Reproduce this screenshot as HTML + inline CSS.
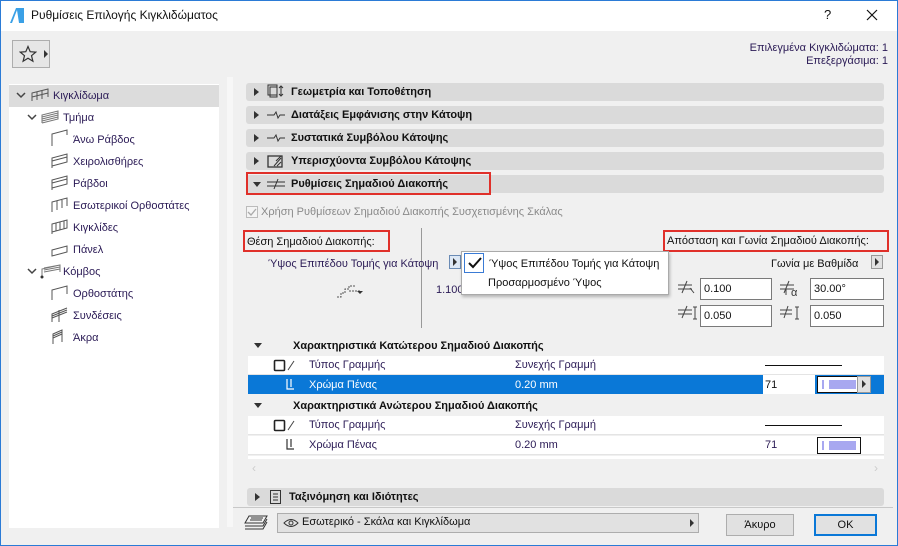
<!DOCTYPE html>
<html><head><meta charset="utf-8"><style>
*{box-sizing:border-box;margin:0;padding:0}
body{width:898px;height:546px;overflow:hidden;background:#f0f0f0;font-family:"Liberation Sans","DejaVu Sans",sans-serif;font-size:11px;color:#1e1040;position:relative}
.a{position:absolute;white-space:nowrap}
.win{position:absolute;left:0;top:0;width:898px;height:546px;border:1px solid #2b7bd6}
.hdr{position:absolute;left:246px;width:638px;height:18px;background:#dadada;border-radius:3px;font-weight:bold;font-size:11px;color:#111}
.hdr .t{position:absolute;left:45px;top:3px}
.tri{position:absolute;left:8px;top:5px;width:0;height:0;border-top:4px solid transparent;border-bottom:4px solid transparent;border-left:5px solid #333}
.trd{position:absolute;width:0;height:0;border-left:4px solid transparent;border-right:4px solid transparent;border-top:5px solid #333}
.red{position:absolute;border:2px solid #e0302a}
.inp{position:absolute;width:72px;height:22px;background:#fff;border:1px solid #7a7a7a;padding:4px 3px;font-size:11px;color:#111}
.tree .a{font-size:11px;color:#2a1a55}
.row{position:absolute;left:248px;width:636px;height:19px;background:#fff;border-bottom:1px solid #e4e4e4}
.btn{position:absolute;height:22px;background:#e1e1e1;border:1px solid #adadad;text-align:center;padding-top:4px;color:#111}
</style></head><body>
<div class="win"></div>
<div class="a" style="left:1px;top:1px;width:896px;height:30px;background:#fff"></div>
<svg class="a" style="left:9px;top:7px" width="16" height="17"><path d="M1 16 L7 1 L15 1 L15 16 Z" fill="#3aa0e6"/><path d="M3 16 L8 3 L10 16Z" fill="#fff"/></svg>
<div class="a" style="left:31px;top:8px;font-size:12px;color:#111">Ρυθμίσεις Επιλογής Κιγκλιδώματος</div>
<div class="a" style="left:824px;top:7px;font-size:13px;color:#111">?</div>
<svg class="a" style="left:866px;top:9px" width="12" height="12"><path d="M1 1L11 11M11 1L1 11" stroke="#111" stroke-width="1.2"/></svg>
<div class="a" style="left:12px;top:40px;width:38px;height:28px;border:1px solid #adadad;background:#e6e6e6"></div>
<svg class="a" style="left:19px;top:45px" width="18" height="18"><path d="M9 1.5 L11.2 6.7 L16.8 7.1 L12.5 10.7 L13.9 16.2 L9 13.2 L4.1 16.2 L5.5 10.7 L1.2 7.1 L6.8 6.7Z" fill="none" stroke="#333" stroke-width="1.2"/></svg>
<div class="a" style="left:44px;top:50px;border-top:4px solid transparent;border-bottom:4px solid transparent;border-left:4px solid #333"></div>
<div class="a" style="right:10px;top:42px;text-align:right;font-size:11px;color:#2a1a55;line-height:13px">Επιλεγμένα Κιγκλιδώματα: 1<br>Επεξεργάσιμα: 1</div>
<div class="a" style="left:9px;top:84px;width:210px;height:444px;background:#fff"></div>
<div class="a" style="left:9px;top:85px;width:210px;height:22px;background:#dcdcdc"></div>
<div class="a" style="left:227px;top:77px;width:6px;height:450px;background:#f7f7f7"></div>
<div class="tree">
<svg class="a" style="left:16px;top:92px" width="10" height="8"><path d="M1 1L5 5L9 1" stroke="#444" fill="none" stroke-width="1.5"/></svg>
<svg class="a" style="left:31px;top:88px" width="18" height="14"><path d="M1 13V5L17 1V9M1 5L17 1M6 4V12M11 3V11M1 9L17 5" stroke="#555" fill="none"/></svg>
<div class="a" style="left:53px;top:90px">Κιγκλίδωμα</div>
<svg class="a" style="left:27px;top:114px" width="10" height="8"><path d="M1 1L5 5L9 1" stroke="#444" fill="none" stroke-width="1.5"/></svg>
<svg class="a" style="left:41px;top:110px" width="18" height="14"><path d="M1 13V5L17 1V9L1 13M1 7L17 3M1 9L17 5M1 11L17 7" stroke="#777" fill="none"/></svg>
<div class="a" style="left:63px;top:112px">Τμήμα</div>
<div class="a" style="left:73px;top:134px">Άνω Ράβδος</div>
<div class="a" style="left:73px;top:156px">Χειρολισθήρες</div>
<div class="a" style="left:73px;top:178px">Ράβδοι</div>
<div class="a" style="left:73px;top:200px">Εσωτερικοί Ορθοστάτες</div>
<div class="a" style="left:73px;top:222px">Κιγκλίδες</div>
<div class="a" style="left:73px;top:244px">Πάνελ</div>
<svg class="a" style="left:27px;top:268px" width="10" height="8"><path d="M1 1L5 5L9 1" stroke="#444" fill="none" stroke-width="1.5"/></svg>
<svg class="a" style="left:40px;top:263px" width="22" height="16"><path d="M2 14V6L20 2V9M4 5L20 2M4 7L20 4M4 9L20 6" stroke="#777" fill="none"/><circle cx="2" cy="14" r="1.5" fill="#333"/></svg>
<div class="a" style="left:63px;top:266px">Κόμβος</div>
<div class="a" style="left:73px;top:288px">Ορθοστάτης</div>
<div class="a" style="left:73px;top:310px">Συνδέσεις</div>
<div class="a" style="left:73px;top:332px">Άκρα</div>
<svg class="a" style="left:50px;top:128px" width="20" height="225" stroke="#555" fill="none">
<path d="M2 18V6L17 2V7"/>
<path d="M2 40V30L17 26V34L2 38M2 33L17 29"/>
<path d="M2 62V52L17 48V56L2 60M2 55L17 51"/>
<path d="M2 84V74L17 70V78M7 73V82M12 72V80"/>
<path d="M2 106V96L17 92V100L2 104M6 95V103M10 94V102M14 93V101"/>
<path d="M2 122L17 118V124L2 128Z"/>
<path d="M2 172V162L17 158V166"/>
<path d="M2 194V186L17 180M2 188L17 182M2 190L17 184M9 182V194"/>
<path d="M3 216V206L12 202V214M3 208L12 204M3 210L12 206"/>
</svg>
</div>
<div class="hdr" style="top:83px"><div class="tri"></div><svg class="a" style="left:20px;top:1px" width="20" height="16"><rect x="2" y="1" width="9" height="10" fill="none" stroke="#333"/><rect x="4" y="3" width="7" height="10" fill="none" stroke="#333"/><path d="M15 2V12M13 4L15 2L17 4M13 10L15 12L17 10" stroke="#333" fill="none"/></svg><div class="t">Γεωμετρία και Τοποθέτηση</div></div>
<div class="hdr" style="top:106px"><div class="tri"></div><svg class="a" style="left:20px;top:4px" width="20" height="10"><path d="M1 5H8L10 2L12 8L14 5H19" stroke="#333" fill="none"/></svg><div class="t">Διατάξεις Εμφάνισης στην Κάτοψη</div></div>
<div class="hdr" style="top:129px"><div class="tri"></div><svg class="a" style="left:20px;top:4px" width="20" height="10"><path d="M1 5H8L10 2L12 8L14 5H19" stroke="#333" fill="none"/></svg><div class="t">Συστατικά Συμβόλου Κάτοψης</div></div>
<div class="hdr" style="top:152px"><div class="tri"></div><svg class="a" style="left:20px;top:1px" width="20" height="16"><rect x="2" y="3" width="14" height="11" fill="none" stroke="#333" stroke-width="1.3"/><path d="M8 13L15 5M11 13L15 9M10 8L15 3" stroke="#333"/></svg><div class="t">Υπερισχύοντα Συμβόλου Κάτοψης</div></div>
<div class="hdr" style="top:175px"><div class="trd" style="left:7px;top:7px"></div><svg class="a" style="left:20px;top:3px" width="20" height="12"><path d="M1 4H19M1 8H19M12 1L8 11" stroke="#333" fill="none"/></svg><div class="t">Ρυθμίσεις Σημαδιού Διακοπής</div></div>
<div class="red" style="left:246px;top:172px;width:245px;height:23px"></div>
<svg class="a" style="left:246px;top:206px" width="12" height="12"><rect x="0.5" y="0.5" width="11" height="11" fill="#f4f4f4" stroke="#bbb"/><path d="M2 6L5 9L10 3" stroke="#aaa" fill="none" stroke-width="1.3"/></svg>
<div class="a" style="left:261px;top:206px;color:#8a8a8a">Χρήση Ρυθμίσεων Σημαδιού Διακοπής Συσχετισμένης Σκάλας</div>
<div class="a" style="left:247px;top:236px;color:#111">Θέση Σημαδιού Διακοπής:</div>
<div class="red" style="left:243px;top:230px;width:147px;height:22px"></div>
<div class="a" style="left:667px;top:235px;color:#111">Απόσταση και Γωνία Σημαδιού Διακοπής:</div>
<div class="red" style="left:663px;top:230px;width:226px;height:22px"></div>
<div class="a" style="left:421px;top:228px;width:1px;height:100px;background:#999"></div>
<div class="a" style="left:268px;top:258px;color:#2a1a55">Ύψος Επιπέδου Τομής για Κάτοψη</div>
<div class="a" style="left:449px;top:255px;width:12px;height:14px;background:#dde8f5;border:1px solid #6a8bb5"></div>
<div class="a" style="left:453px;top:258px;border-top:4px solid transparent;border-bottom:4px solid transparent;border-left:4px solid #333"></div>
<svg class="a" style="left:335px;top:283px" width="30" height="16"><path d="M2 14H6V10H10V6H14V3H20M14 8H26" stroke="#555" fill="none" stroke-dasharray="2 1"/><path d="M22 8L25 11L28 8Z" fill="#333"/></svg>
<div class="a" style="left:436px;top:284px;color:#2a1a55">1.100</div>
<div class="a" style="left:461px;top:251px;width:208px;height:44px;background:#fff;border:1px solid #aaa;box-shadow:1px 2px 3px rgba(0,0,0,.25)"></div>
<div class="a" style="left:464px;top:253px;width:20px;height:20px;border:1px solid #3a7bd5"></div>
<svg class="a" style="left:467px;top:256px" width="16" height="14"><path d="M2 7L6 11L14 2" stroke="#111" fill="none" stroke-width="2"/></svg>
<div class="a" style="left:489px;top:258px;color:#111">Ύψος Επιπέδου Τομής για Κάτοψη</div>
<div class="a" style="left:488px;top:277px;color:#111">Προσαρμοσμένο Ύψος</div>
<div class="a" style="left:771px;top:258px;color:#111">Γωνία με Βαθμίδα</div>
<div class="a" style="left:871px;top:255px;width:12px;height:14px;background:#e1e1e1;border:1px solid #999"></div>
<div class="a" style="left:875px;top:258px;border-top:4px solid transparent;border-bottom:4px solid transparent;border-left:4px solid #333"></div>
<svg class="a" style="left:676px;top:279px" width="24" height="50" stroke="#444" fill="none"><path d="M2 6H16M2 10H16M11 2L6 14M14 9L18 14"/><path d="M2 31H16M2 35H16M11 27L6 39M19 28V40M17 28H21M17 40H21"/></svg>
<div class="inp" style="left:700px;top:278px">0.100</div>
<div class="inp" style="left:700px;top:305px">0.050</div>
<svg class="a" style="left:778px;top:279px" width="26" height="50" stroke="#444" fill="none"><path d="M2 6H16M2 10H16M11 2L6 14M8 10V16" /><text x="13" y="17" font-size="11" fill="#333" stroke="none" font-family="Liberation Sans">α</text><path d="M2 31H14M2 35H14M10 27L6 39M19 28V40M17 28H21M17 40H21"/></svg>
<div class="inp" style="left:810px;top:278px;width:74px">30.00°</div>
<div class="inp" style="left:810px;top:305px;width:74px">0.050</div>
<div class="trd" style="left:254px;top:343px"></div>
<div class="a" style="left:293px;top:340px;font-weight:bold;color:#111">Χαρακτηριστικά Κατώτερου Σημαδιού Διακοπής</div>
<div class="row" style="top:356px"></div>
<div class="a" style="left:248px;top:375px;width:636px;height:19px;background:#0a78d7"></div>
<div class="a" style="left:763px;top:375px;width:52px;height:19px;background:#fff"></div>
<div class="trd" style="left:254px;top:403px"></div>
<div class="a" style="left:293px;top:400px;font-weight:bold;color:#111">Χαρακτηριστικά Ανώτερου Σημαδιού Διακοπής</div>
<div class="row" style="top:416px"></div>
<div class="row" style="top:436px"></div>
<div class="a" style="left:248px;top:456px;width:636px;height:3px;background:#fff"></div>
<svg class="a" style="left:272px;top:357px" width="30" height="100" fill="none"><rect x="2.5" y="3.5" width="10" height="10" rx="1" stroke="#222" stroke-width="1.6"/><path d="M16 13L22 4" stroke="#444"/><path d="M15 22V32H22M19 22V30" stroke="#fff" stroke-width="1.2"/><rect x="2.5" y="63.5" width="10" height="10" rx="1" stroke="#222" stroke-width="1.6"/><path d="M16 73L22 64" stroke="#444"/><path d="M15 82V92H22M19 82V90" stroke="#333" stroke-width="1.2"/></svg>
<div class="a" style="left:309px;top:359px;color:#2a1a55">Τύπος Γραμμής</div>
<div class="a" style="left:515px;top:359px;color:#2a1a55">Συνεχής Γραμμή</div>
<div class="a" style="left:765px;top:365px;width:77px;height:1px;background:#111"></div>
<div class="a" style="left:309px;top:379px;color:#fff">Χρώμα Πένας</div>
<div class="a" style="left:515px;top:379px;color:#fff">0.20 mm</div>
<div class="a" style="left:765px;top:379px;color:#111">71</div>
<div class="a" style="left:817px;top:376px;width:54px;height:17px;background:#fff;border:1px solid #111"></div>
<div class="a" style="left:822px;top:380px;width:2px;height:9px;background:#a8a8f0"></div>
<div class="a" style="left:829px;top:380px;width:27px;height:9px;background:#a8a8f0"></div>
<div class="a" style="left:857px;top:376px;width:14px;height:17px;background:#e1e1e1;border:1px solid #999"></div>
<div class="a" style="left:862px;top:380px;border-top:4px solid transparent;border-bottom:4px solid transparent;border-left:4px solid #333"></div>
<div class="a" style="left:309px;top:419px;color:#2a1a55">Τύπος Γραμμής</div>
<div class="a" style="left:515px;top:419px;color:#2a1a55">Συνεχής Γραμμή</div>
<div class="a" style="left:765px;top:425px;width:77px;height:1px;background:#111"></div>
<div class="a" style="left:309px;top:439px;color:#2a1a55">Χρώμα Πένας</div>
<div class="a" style="left:515px;top:439px;color:#2a1a55">0.20 mm</div>
<div class="a" style="left:765px;top:439px;color:#2a1a55">71</div>
<div class="a" style="left:817px;top:437px;width:44px;height:17px;background:#fff;border:1px solid #111"></div>
<div class="a" style="left:822px;top:441px;width:2px;height:9px;background:#a8a8f0"></div>
<div class="a" style="left:829px;top:441px;width:27px;height:9px;background:#a8a8f0"></div>
<div class="a" style="left:252px;top:461px;color:#ccc;font-size:12px">‹</div>
<div class="a" style="left:874px;top:461px;color:#ccc;font-size:12px">›</div>
<div class="hdr" style="top:488px;left:247px;width:637px"><div class="tri"></div><svg class="a" style="left:22px;top:1px" width="14" height="16"><rect x="1.5" y="1.5" width="10" height="13" fill="none" stroke="#333"/><path d="M4 5H9M4 8H9M4 11H9" stroke="#333"/></svg><div class="t" style="left:42px">Ταξινόμηση και Ιδιότητες</div></div>
<div class="a" style="left:233px;top:507px;width:660px;height:1px;background:#c8c8c8"></div>
<svg class="a" style="left:243px;top:514px" width="26" height="20" stroke="#333" fill="none"><path d="M6 2H24L20 9H2Z"/><path d="M2 12H20L24 5M2 15H20L24 8M8 4H20M7 6H19" /></svg>
<div class="a" style="left:277px;top:513px;width:422px;height:20px;background:#e1e1e1;border:1px solid #adadad"></div>
<svg class="a" style="left:283px;top:518px" width="16" height="10"><path d="M1 5Q8 -2 15 5Q8 12 1 5Z" fill="none" stroke="#333"/><circle cx="8" cy="5" r="2" fill="none" stroke="#333"/></svg>
<div class="a" style="left:302px;top:516px;color:#111">Εσωτερικό - Σκάλα και Κιγκλίδωμα</div>
<div class="a" style="left:690px;top:519px;border-top:4px solid transparent;border-bottom:4px solid transparent;border-left:4px solid #333"></div>
<div class="btn" style="left:726px;top:514px;width:68px">Άκυρο</div>
<div class="btn" style="left:814px;top:514px;width:63px;border:2px solid #0a78d7;padding-top:3px">OK</div>
</body></html>
